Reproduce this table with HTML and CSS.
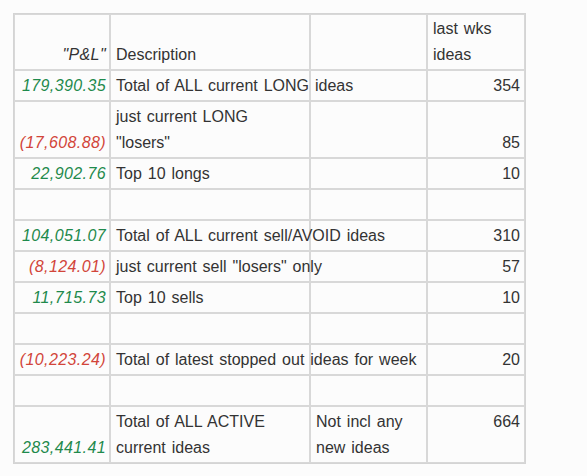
FILE: index.html
```html
<!DOCTYPE html>
<html>
<head>
<meta charset="utf-8">
<link rel="stylesheet" href="styles.css">
</head>
<body>
<table class="pl">
  <tr class="head">
    <td class="c1 num hdr">"P&amp;L"</td>
    <td class="c2">Description</td>
    <td class="c3"></td>
    <td class="c4 top">last wks<br>ideas</td>
  </tr>
  <tr>
    <td class="num pos">179,390.35</td>
    <td>Total of ALL current LONG ideas</td>
    <td></td>
    <td class="cnt">354</td>
  </tr>
  <tr>
    <td class="num neg">(17,608.88)</td>
    <td class="top">just current LONG<br>"losers"</td>
    <td></td>
    <td class="cnt">85</td>
  </tr>
  <tr>
    <td class="num pos">22,902.76</td>
    <td>Top 10 longs</td>
    <td></td>
    <td class="cnt">10</td>
  </tr>
  <tr class="empty"><td></td><td></td><td></td><td></td></tr>
  <tr>
    <td class="num pos">104,051.07</td>
    <td>Total of ALL current sell/AVOID ideas</td>
    <td></td>
    <td class="cnt">310</td>
  </tr>
  <tr>
    <td class="num neg">(8,124.01)</td>
    <td>just current sell "losers" only</td>
    <td></td>
    <td class="cnt">57</td>
  </tr>
  <tr>
    <td class="num pos">11,715.73</td>
    <td>Top 10 sells</td>
    <td></td>
    <td class="cnt">10</td>
  </tr>
  <tr class="empty"><td></td><td></td><td></td><td></td></tr>
  <tr>
    <td class="num neg">(10,223.24)</td>
    <td>Total of latest stopped out ideas for week</td>
    <td></td>
    <td class="cnt">20</td>
  </tr>
  <tr class="empty"><td></td><td></td><td></td><td></td></tr>
  <tr>
    <td class="num pos">283,441.41</td>
    <td class="top">Total of ALL ACTIVE<br>current ideas</td>
    <td class="top">Not incl any<br>new ideas</td>
    <td class="cnt top">664</td>
  </tr>
</table>
</body>
</html>
```
FILE: styles.css
```css
html, body {
  background: #fcfcfc;
}
body {
  margin: 13px;
  font-family: "Liberation Sans", Arial, sans-serif;
  font-size: 16px;
  color: #333333;
}
.pl {
  border-collapse: separate;
  border-spacing: 0;
  table-layout: fixed;
  border: 1px solid #d4d4d4;
  width: 513px;
}
.pl td {
  box-sizing: border-box;
  border: 1px solid #d8d8d8;
  padding: 2px 5px 1px 5px;
  line-height: 26px;
  vertical-align: bottom;
  white-space: nowrap;
  overflow: visible;
  word-spacing: 1.5px;
}
.pl .head td { padding-top: 1px; }
.pl .c1 { width: 96px; }
.pl .c2 { width: 200px; }
.pl .c3 { width: 117px; }
.pl .c4 { width: 98px; }
.pl td.top { vertical-align: top; }
.pl td.num {
  text-align: right;
  font-style: italic;
  padding-right: 3px;
  padding-left: 0;
  letter-spacing: 0.4px;
}
.hdr { color: #333333; }
.pos { color: #1f8a4c; }
.neg { color: #d2453a; }
.pl td.cnt { text-align: right; padding-right: 4px; }
.empty td { height: 31px; }
```
